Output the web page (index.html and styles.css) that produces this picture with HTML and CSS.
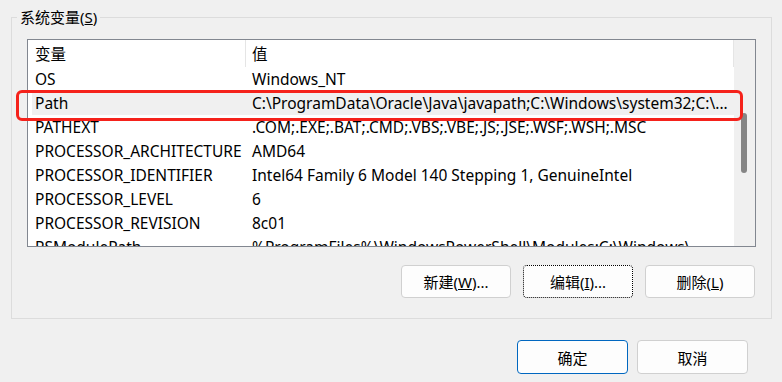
FILE: index.html
```html
<!DOCTYPE html>
<html lang="zh-CN">
<head>
    <meta charset="UTF-8">
    <title>系统变量</title>
    <link rel="stylesheet" href="styles.css">
</head>
<body>

<div class="page">
    <fieldset class="group">
        <legend>系统变量(<u>S</u>)</legend>

        <div class="list">
            <div class="table">
                <div class="row head">
                    <div class="cell">变量</div>
                    <div class="cell">值</div>
                </div>
                <div class="row">
                    <div class="cell">OS</div>
                    <div class="cell">Windows_NT</div>
                </div>
                <div class="row selected">
                    <div class="cell">Path</div>
                    <div class="cell">C:\ProgramData\Oracle\Java\javapath;C:\Windows\system32;C:\...</div>
                </div>
                <div class="row">
                    <div class="cell">PATHEXT</div>
                    <div class="cell">.COM;.EXE;.BAT;.CMD;.VBS;.VBE;.JS;.JSE;.WSF;.WSH;.MSC</div>
                </div>
                <div class="row">
                    <div class="cell">PROCESSOR_ARCHITECTURE</div>
                    <div class="cell">AMD64</div>
                </div>
                <div class="row">
                    <div class="cell">PROCESSOR_IDENTIFIER</div>
                    <div class="cell">Intel64 Family 6 Model 140 Stepping 1, GenuineIntel</div>
                </div>
                <div class="row">
                    <div class="cell">PROCESSOR_LEVEL</div>
                    <div class="cell">6</div>
                </div>
                <div class="row">
                    <div class="cell">PROCESSOR_REVISION</div>
                    <div class="cell">8c01</div>
                </div>
                <div class="row">
                    <div class="cell">PSModulePath</div>
                    <div class="cell">%ProgramFiles%\WindowsPowerShell\Modules;C:\Windows\...</div>
                </div>
            </div>
            <div class="scroll">
                <div class="thumb"></div>
            </div>
        </div>

        <div class="actions">
            <button type="button">新建(<u>W</u>)...</button>
            <button type="button" class="focused">编辑(<u>I</u>)...</button>
            <button type="button">删除(<u>L</u>)</button>
        </div>
    </fieldset>

    <div class="dialog-actions">
        <button type="button" class="default">确定</button>
        <button type="button">取消</button>
    </div>

    <!-- red highlight drawn over the Path row -->
    <div class="mark"></div>
</div>

</body>
</html>
```

FILE: styles.css
```css
* {
    margin: 0;
    padding: 0;
    box-sizing: border-box;
}

body {
    font-family: "Noto Sans", "Noto Sans CJK SC", sans-serif;
    font-size: 15px;
    color: #000;
    background: #f0f0f0;
}

.page {
    position: relative;
    width: 782px;
    height: 382px;
    padding-top: 7px;
}

/* group box */
.group {
    margin: 0 10px 0 11px;
    border: 1px solid #dcdcdc;
    padding: 12px 15px 20px 15px;
}

.group legend {
    margin-left: -10px;
    padding: 0 3px;
    line-height: 20px;
}

/* list view */
.list {
    display: flex;
    height: 208px;
    background: #fff;
    border: 1px solid #828790;
    overflow: hidden;
}

.table {
    width: 706px;
    font-size: 15.5px;
    white-space: nowrap;
}

.row {
    display: grid;
    grid-template-columns: 218px 1fr;
    height: 24px;
    line-height: 25px;
}

.row .cell {
    padding-left: 6px;
    overflow: hidden;
}

.row .cell:first-child {
    padding-left: 7px;
}

.row.head {
    height: 27px;
    line-height: 29px;
}

.row.head .cell {
    border-right: 1px solid #e5e5e5;
}

.row.selected {
    background: #f0f0f0;
    box-shadow: inset 4px 0 #fff;
}

.scroll {
    flex: 1;
    background: #f0f0f0;
}

.thumb {
    width: 6px;
    height: 60px;
    margin: 73px 0 0 7px;
    background: #858585;
    border-radius: 3px;
}

/* buttons */
button {
    font: inherit;
    color: #000;
    background: #fdfdfd;
    border: 1px solid #d0d0d0;
    border-radius: 4px;
}

.actions {
    display: flex;
    justify-content: flex-end;
    gap: 12px;
    margin-top: 18px;
    padding-right: 1px;
}

.actions button {
    width: 110px;
    height: 33px;
}

.actions button.focused {
    border: 1px dotted #000;
}

.dialog-actions {
    display: flex;
    justify-content: flex-end;
    gap: 9px;
    margin: 21px 34px 0 0;
}

.dialog-actions button {
    width: 111px;
    height: 34px;
}

.dialog-actions button.default {
    border-color: #0067c0;
}

.mark {
    position: absolute;
    left: 16px;
    top: 90px;
    width: 727px;
    height: 31px;
    border: 3.5px solid #f5221b;
    border-radius: 6px;
}
```
